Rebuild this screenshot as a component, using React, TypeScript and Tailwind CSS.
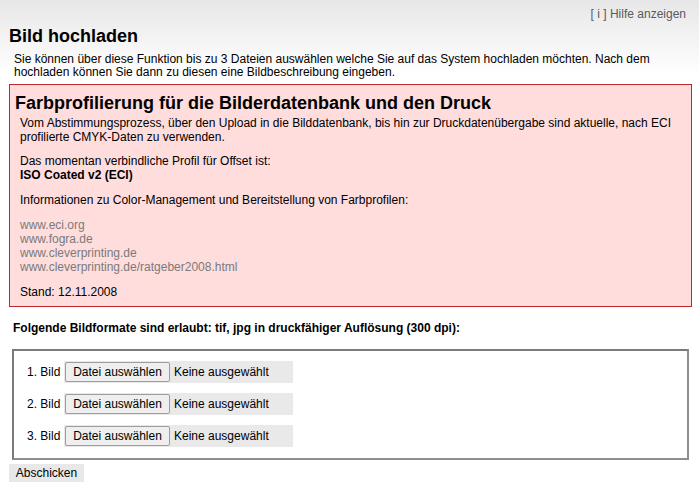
const links = [
  "www.eci.org",
  "www.fogra.de",
  "www.cleverprinting.de",
  "www.cleverprinting.de/ratgeber2008.html",
];

function FileRow({ nr }: { nr: number }) {
  return (
    <div className="flex items-center h-[22px]">
      <span className="w-[37px] text-[12px] leading-[14px]">{nr}. Bild</span>
      <div className="flex items-center h-[22px] w-[229px] bg-[#e9e9e9]">
        <button
          type="button"
          className="ml-[1px] h-[20px] w-[105px] rounded-[2px] border border-[#9c9c9c] bg-[#efefef] text-[12px] leading-[14px] text-black"
        >
          Datei auswählen
        </button>
        <span className="ml-[4px] text-[12px] leading-[14px]">Keine ausgewählt</span>
      </div>
    </div>
  );
}

export default function App() {
  return (
    <div
      className="min-h-screen w-[699px] bg-[linear-gradient(#e7e7e7,#ffffff_75px)] text-black"
      style={{ fontFamily: '"Liberation Sans", Arial, sans-serif' }}
    >
      {/* Hilfe-Link oben rechts */}
      <div className="pt-[7px] pr-[13px] text-right text-[12px] leading-[14px] text-[#5a5a5a]">
        [ i ] Hilfe anzeigen
      </div>

      <h1 className="mt-[4px] ml-[9px] text-[18px] leading-[22px] font-bold">Bild hochladen</h1>

      <p className="mt-[6px] ml-[14px] mr-[8px] text-[12px] leading-[13px]">
        Sie können über diese Funktion bis zu 3 Dateien auswählen welche Sie auf das System hochladen
        möchten. Nach dem hochladen können Sie dann zu diesen eine Bildbeschreibung eingeben.
      </p>

      {/* Hinweisbox Farbprofile */}
      <div className="mt-[5px] ml-[9px] mr-[7px] border border-[#c0272d] bg-[#ffdddd] pt-[7px] pb-[6.5px] pl-[5px] pr-[10px]">
        <h2 className="text-[18px] leading-[22px] font-bold">
          Farbprofilierung für die Bilderdatenbank und den Druck
        </h2>
        <div className="mt-[3px] pl-[5px] text-[12px] leading-[13.5px]">
          <p>
            Vom Abstimmungsprozess, über den Upload in die Bilddatenbank, bis hin zur Druckdatenübergabe
            sind aktuelle, nach ECI profilierte CMYK-Daten zu verwenden.
          </p>
          <p className="mt-[11px]">
            Das momentan verbindliche Profil für Offset ist:
            <br />
            <b>ISO Coated v2 (ECI)</b>
          </p>
          <p className="mt-[12px]">Informationen zu Color-Management und Bereitstellung von Farbprofilen:</p>
          <div className="mt-[10px] leading-[14px] text-[#7a7a7a]">
            {links.map((l) => (
              <div key={l}>{l}</div>
            ))}
          </div>
          <p className="mt-[12px]">Stand: 12.11.2008</p>
        </div>
      </div>

      <p className="mt-[14px] ml-[13px] text-[12px] leading-[14px] font-bold">
        Folgende Bildformate sind erlaubt: tif, jpg in druckfähiger Auflösung (300 dpi):
      </p>

      {/* Upload-Felder */}
      <form>
        <fieldset className="mt-[14px] ml-[12px] mr-[10px] flex flex-col gap-[10px] border-2 border-t-[#7b7b7b] border-l-[#7b7b7b] border-b-[#8e8e8e] border-r-[#8e8e8e] pt-[10px] pb-[11px] pl-[13px]">
          <FileRow nr={1} />
          <FileRow nr={2} />
          <FileRow nr={3} />
        </fieldset>
        <button
          type="button"
          className="mt-[1px] ml-[9px] h-[18px] w-[75px] bg-[#e8e8e8] text-[12px] leading-[14px] text-black"
        >
          Abschicken
        </button>
      </form>
    </div>
  );
}
